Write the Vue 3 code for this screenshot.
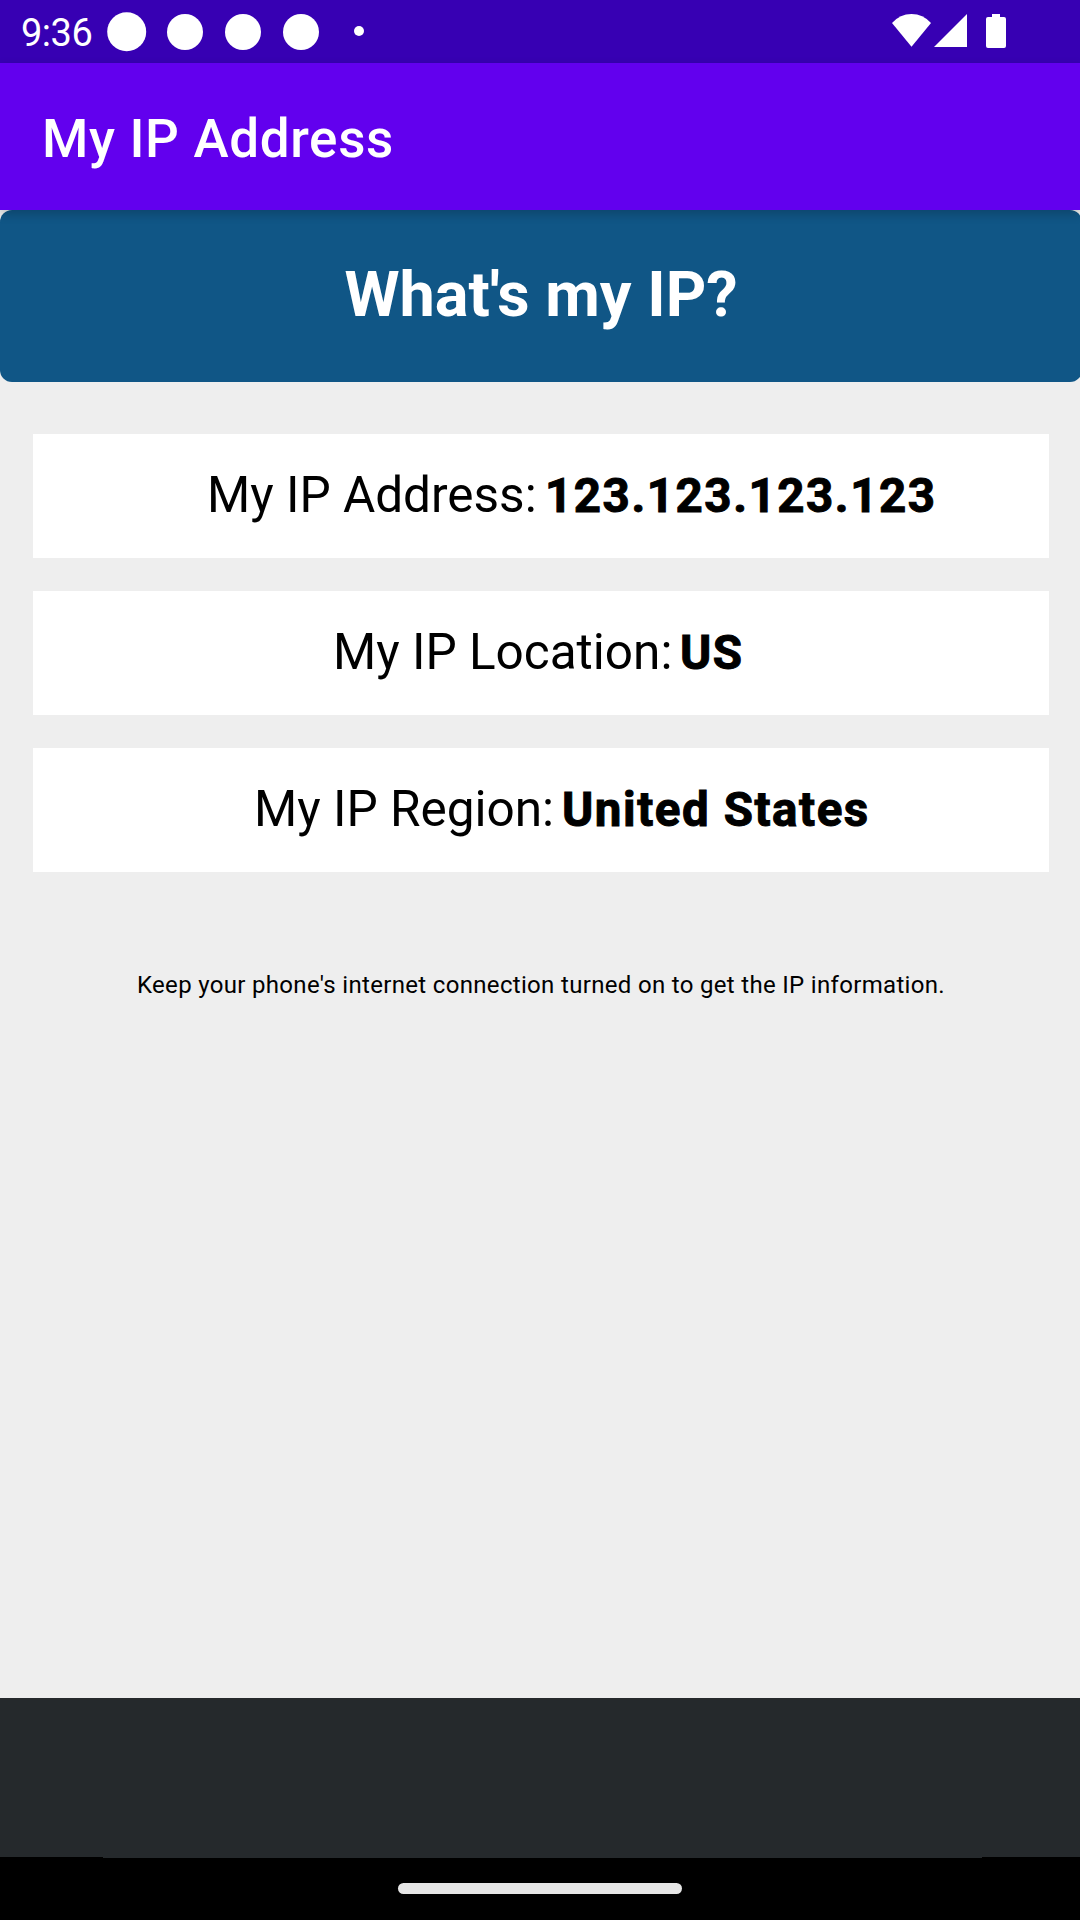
<script setup>
const rows = [
  { key: 'address', label: 'My IP Address:', value: '123.123.123.123' },
  { key: 'location', label: 'My IP Location:', value: 'US' },
  { key: 'region', label: 'My IP Region:', value: 'United States' },
]
</script>

<template>
  <div class="screen">
    <div class="status">
      <span class="clock">9:36</span>
      <svg class="notifications" width="260" height="63" viewBox="0 0 260 63" fill="#fff">
        <circle cx="19.7" cy="31.7" r="19.5" />
        <circle cx="78" cy="32" r="18" />
        <circle cx="136" cy="32" r="18" />
        <circle cx="194" cy="32" r="18" />
        <circle cx="252" cy="31" r="5" />
      </svg>
      <svg class="system" width="120" height="63" viewBox="0 0 120 63" fill="#fff">
        <path d="M0 23Q8 14 19.500 14T39 23L19.500 46.700Z" />
        <path d="M75 14V47H42Z" />
        <path d="M100 14H108V17H112Q114 17 114 19V46Q114 48 112 48H96Q94 48 94 46V19Q94 17 96 17H100Z" />
      </svg>
    </div>
    <header class="bar"><h1>My IP Address</h1></header>
    <main class="content">
      <button class="ask">What's my IP?</button>
      <section class="cards">
        <div v-for="r in rows" :key="r.key" class="card" :class="r.key">
          <span class="label">{{ r.label }}</span>
          <span class="value">{{ r.value }}</span>
        </div>
      </section>
      <p class="hint">Keep your phone's internet connection turned on to get the IP information.</p>
    </main>
    <div class="banner"></div>
    <div class="nav"><div class="pill"></div></div>
  </div>
</template>

<style>
body { margin: 0; }
</style>

<style scoped>
.screen {
  width: 1080px;
  height: 1920px;
  display: flex;
  flex-direction: column;
  overflow: hidden;
  background: #eee;
  font-family: Roboto, sans-serif;
  white-space: nowrap;
}
.status {
  flex: none;
  height: 63px;
  display: flex;
  background: #3700b3;
  color: #fff;
}
.clock {
  width: 86px;
  padding-left: 21px;
  font-size: 38px;
  line-height: 66px;
  letter-spacing: -0.5px;
}
.system { margin-left: 525px; }
.bar {
  flex: none;
  height: 147px;
  display: flex;
  align-items: center;
  box-sizing: border-box;
  padding: 4px 0 0 42px;
  background: #6200ee;
  box-shadow: 0 4px 10px rgba(0, 0, 0, 0.2);
  z-index: 1;
}
h1 {
  margin: 0;
  color: #fff;
  font-size: 53px;
  font-weight: 500;
  line-height: 62px;
  letter-spacing: 0.65px;
}
.content {
  flex: 1;
  display: flex;
  flex-direction: column;
}
.ask {
  height: 172px;
  margin: 0 -2px 0 0;
  padding: 0 0 2px;
  border: 0;
  border-radius: 12px;
  background: #105686;
  color: #fff;
  font: 700 63px/170px Roboto, sans-serif;
}
.cards {
  display: flex;
  flex-direction: column;
  gap: 33px;
  margin: 52px 31px 0 33px;
}
.card {
  box-sizing: border-box;
  height: 124px;
  display: flex;
  align-items: baseline;
  background: #fff;
  color: #000;
  line-height: 122px;
}
.label { font-size: 49.5px; }
.value {
  font-size: 47.5px;
  font-weight: 700;
  letter-spacing: 1.55px;
  -webkit-text-stroke: 1px #000;
}
.address { padding-left: 174px; }
.address .label { width: 338px; }
.location { padding-left: 300px; }
.location .label { width: 347px; }
.region { padding-left: 221px; }
.region .label { width: 308px; }
.hint {
  margin: 97px 0 0 2px;
  text-align: center;
  font-size: 24px;
  line-height: 32px;
  letter-spacing: 0.32px;
  color: #000;
}
.banner {
  flex: none;
  height: 159px;
  background: #25292c;
}
.nav {
  flex: none;
  height: 63px;
  box-sizing: border-box;
  padding-top: 26px;
  background: linear-gradient(#25292c, #25292c) 103px 0 / 879px 1px no-repeat #000;
}
.pill {
  width: 284px;
  height: 11px;
  margin: 0 auto;
  border-radius: 5.5px;
  background: #e6e6e6;
}
</style>
